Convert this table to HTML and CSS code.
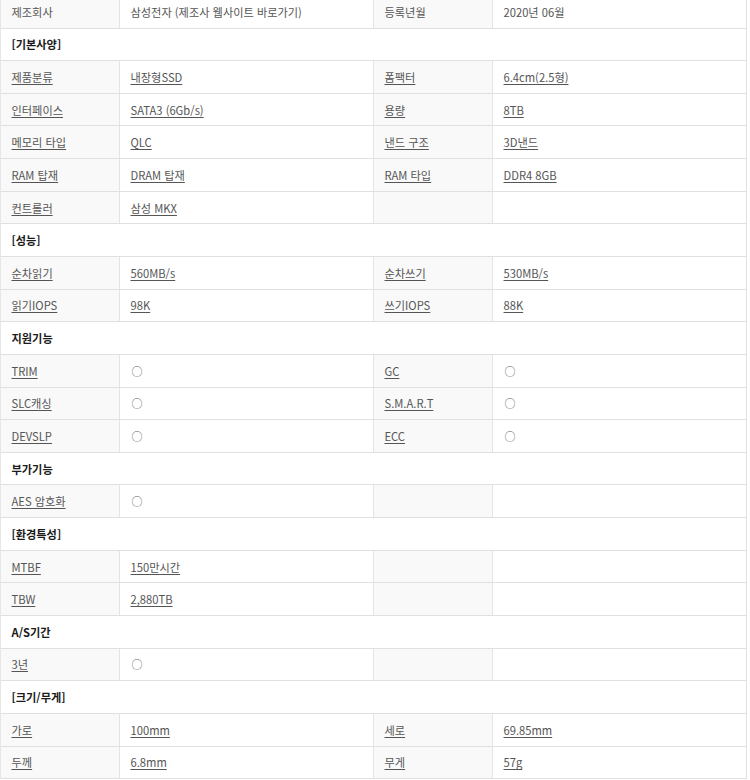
FILE: index.html
```html
<!DOCTYPE html>
<html lang="ko">
<head>
<meta charset="utf-8">
<title>SSD 사양</title>
<link rel="stylesheet" href="styles.css">
</head>
<body>
<div class="spec">
  <div class="row">
    <div class="lab plain">제조회사</div><div class="val plain">삼성전자 (제조사 웹사이트 바로가기)</div>
    <div class="lab plain">등록년월</div><div class="val plain">2020년 06월</div>
  </div>
  <div class="row sec"><div class="head">[기본사양]</div></div>
  <div class="row">
    <div class="lab"><u>제품분류</u></div><div class="val"><u>내장형SSD</u></div>
    <div class="lab"><u>폼팩터</u></div><div class="val"><u>6.4cm(2.5형)</u></div>
  </div>
  <div class="row">
    <div class="lab"><u>인터페이스</u></div><div class="val"><u>SATA3 (6Gb/s)</u></div>
    <div class="lab"><u>용량</u></div><div class="val"><u>8TB</u></div>
  </div>
  <div class="row">
    <div class="lab"><u>메모리 타입</u></div><div class="val"><u>QLC</u></div>
    <div class="lab"><u>낸드 구조</u></div><div class="val"><u>3D낸드</u></div>
  </div>
  <div class="row">
    <div class="lab"><u>RAM 탑재</u></div><div class="val"><u>DRAM 탑재</u></div>
    <div class="lab"><u>RAM 타입</u></div><div class="val"><u>DDR4 8GB</u></div>
  </div>
  <div class="row">
    <div class="lab"><u>컨트롤러</u></div><div class="val"><u>삼성 MKX</u></div>
    <div class="lab"></div><div class="val"></div>
  </div>
  <div class="row sec"><div class="head">[성능]</div></div>
  <div class="row">
    <div class="lab"><u>순차읽기</u></div><div class="val"><u>560MB/s</u></div>
    <div class="lab"><u>순차쓰기</u></div><div class="val"><u>530MB/s</u></div>
  </div>
  <div class="row">
    <div class="lab"><u>읽기IOPS</u></div><div class="val"><u>98K</u></div>
    <div class="lab"><u>쓰기IOPS</u></div><div class="val"><u>88K</u></div>
  </div>
  <div class="row sec"><div class="head">지원기능</div></div>
  <div class="row">
    <div class="lab"><u>TRIM</u></div><div class="val"><span class="o">○</span></div>
    <div class="lab"><u>GC</u></div><div class="val"><span class="o">○</span></div>
  </div>
  <div class="row">
    <div class="lab"><u>SLC캐싱</u></div><div class="val"><span class="o">○</span></div>
    <div class="lab"><u>S.M.A.R.T</u></div><div class="val"><span class="o">○</span></div>
  </div>
  <div class="row">
    <div class="lab"><u>DEVSLP</u></div><div class="val"><span class="o">○</span></div>
    <div class="lab"><u>ECC</u></div><div class="val"><span class="o">○</span></div>
  </div>
  <div class="row sec"><div class="head">부가기능</div></div>
  <div class="row">
    <div class="lab"><u>AES 암호화</u></div><div class="val"><span class="o">○</span></div>
    <div class="lab"></div><div class="val"></div>
  </div>
  <div class="row sec"><div class="head">[환경특성]</div></div>
  <div class="row">
    <div class="lab"><u>MTBF</u></div><div class="val"><u>150만시간</u></div>
    <div class="lab"></div><div class="val"></div>
  </div>
  <div class="row">
    <div class="lab"><u>TBW</u></div><div class="val"><u>2,880TB</u></div>
    <div class="lab"></div><div class="val"></div>
  </div>
  <div class="row sec"><div class="head">A/S기간</div></div>
  <div class="row">
    <div class="lab"><u>3년</u></div><div class="val"><span class="o">○</span></div>
    <div class="lab"></div><div class="val"></div>
  </div>
  <div class="row sec"><div class="head">[크기/무게]</div></div>
  <div class="row">
    <div class="lab"><u>가로</u></div><div class="val"><u>100mm</u></div>
    <div class="lab"><u>세로</u></div><div class="val"><u>69.85mm</u></div>
  </div>
  <div class="row">
    <div class="lab"><u>두께</u></div><div class="val"><u>6.8mm</u></div>
    <div class="lab"><u>무게</u></div><div class="val"><u>57g</u></div>
  </div>
</div>
</body>
</html>
```
FILE: styles.css
```css
html, body {
  margin: 0;
  padding: 0;
  background: #ffffff;
}
body {
  font-family: "Noto Sans CJK KR", "Noto Sans", sans-serif;
  font-size: 11.2px;
  color: #555555;
  overflow: hidden;
}
.spec {
  width: 747px;
  margin-top: -4.15px;
  border-left: 1px solid #e6e6e6;
  border-right: 1px solid #e2e2e2;
  box-sizing: border-box;
}
.row {
  display: grid;
  grid-template-columns: 119px 254px 119px 1fr;
  height: 32.65px;
  box-sizing: border-box;
  border-bottom: 1px solid #e0e0e0;
}
.row.sec {
  grid-template-columns: 1fr;
}
.lab, .val, .head {
  display: flex;
  align-items: center;
  padding-left: 10.5px;
  white-space: nowrap;
}
.lab {
  background: #f9f9f9;
  border-right: 1px solid #e4e4e4;
}
.val {
  background: #ffffff;
  border-right: 1px solid #e4e4e4;
}
.val:last-child {
  border-right: none;
}
.head {
  font-weight: 700;
  color: #1a1a1a;
}
u {
  text-decoration: underline;
  text-underline-offset: 2px;
  text-decoration-thickness: 1px;
}
.o {
  font-size: 11px;
  color: #666666;
  padding-left: 1px;
}
```
